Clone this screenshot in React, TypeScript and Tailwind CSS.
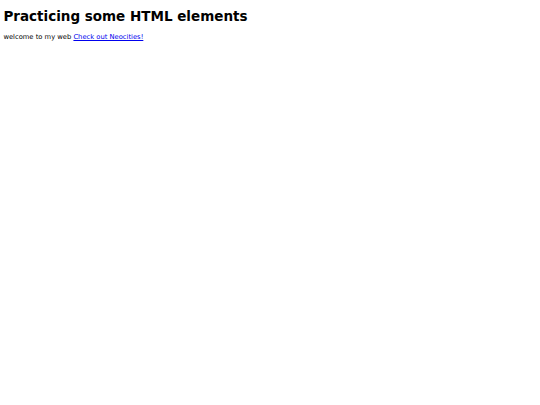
export default function App() {
  return (
    <div
      className="min-h-[405px] bg-white text-black px-[3.4px] pt-[9px]"
      style={{ fontFamily: '"DejaVu Sans", sans-serif' }}
    >
      <h1 className="text-[13.5px] font-bold leading-[15.7px]">Practicing some HTML elements</h1>
      <p className="text-[6.75px] mt-[9px] leading-[7.9px]">
        welcome to my web{" "}
        <a href="#" className="text-[#0000ee] underline">
          Check out Neocities!
        </a>
      </p>
    </div>
  );
}
